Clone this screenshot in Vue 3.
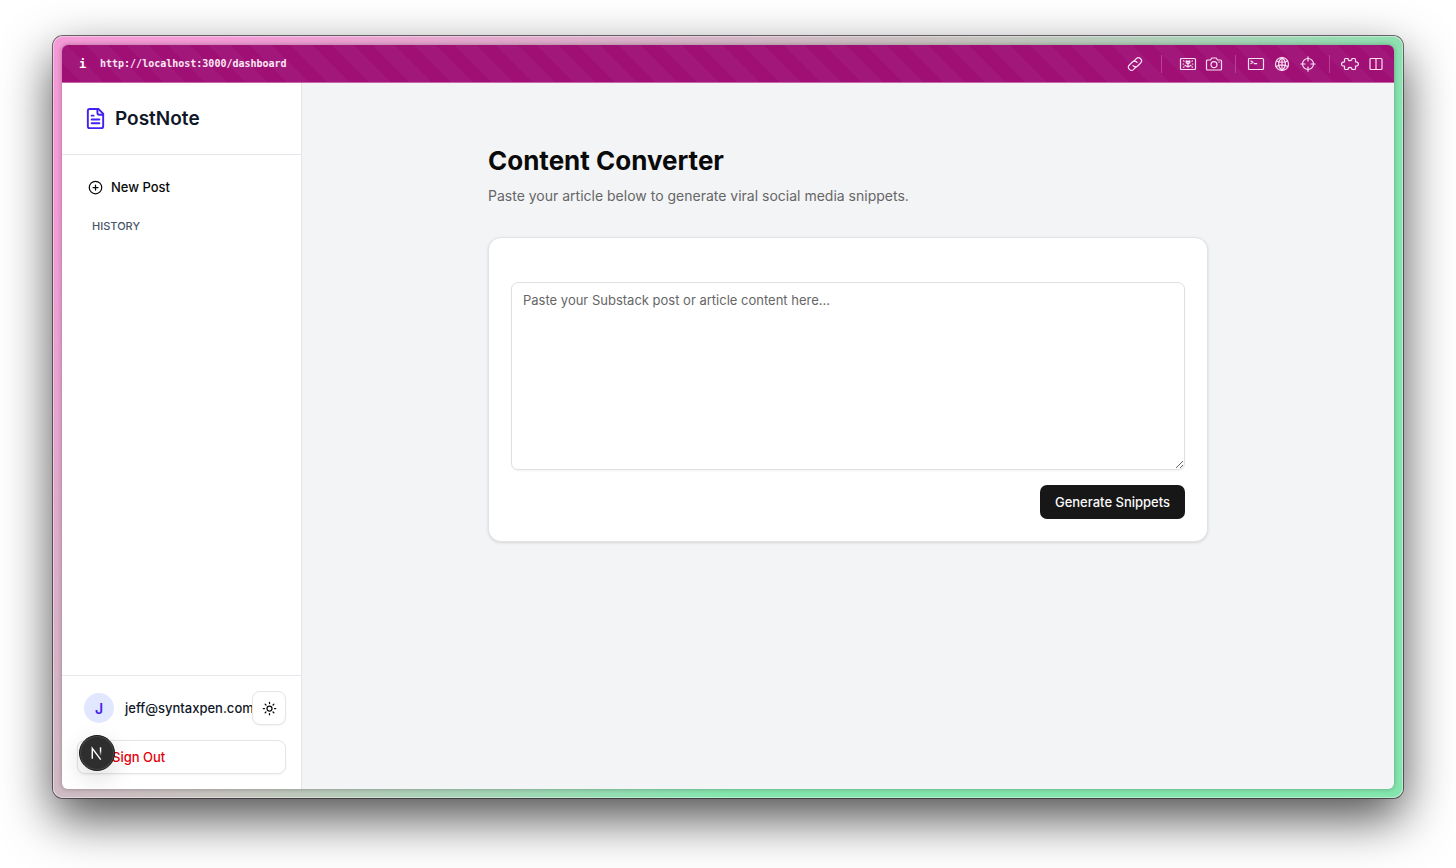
<template>
  <div class="desktop">
    <div class="browser">
      <div class="viewport">
        <header class="toolbar">
          <span class="info">i</span>
          <a class="address" href="http://localhost:3000/dashboard">http://localhost:3000/dashboard</a>
          <nav class="tools" aria-label="Browser tools">
            <div v-for="(group, index) in toolGroups" :key="index" class="tool-group">
              <button v-for="tool in group" :key="tool.name" type="button" class="tool" :aria-label="tool.name">
                <svg viewBox="0 0 18 16" aria-hidden="true">
                  <path v-for="d in tool.paths" :key="d" :d="d" />
                </svg>
              </button>
            </div>
          </nav>
        </header>

        <div class="app">
          <aside class="sidebar">
            <div class="brand">
              <svg class="brand-icon" viewBox="0 0 24 24" aria-hidden="true">
                <path d="M15 2H6a2 2 0 0 0-2 2v16a2 2 0 0 0 2 2h12a2 2 0 0 0 2-2V7z" />
                <path d="M14 2v4a2 2 0 0 0 2 2h4" />
                <path d="M10 9H8" />
                <path d="M16 13H8" />
                <path d="M16 17H8" />
              </svg>
              <span>PostNote</span>
            </div>

            <div class="menu">
              <button type="button" class="new-post" @click="content = ''">
                <svg viewBox="0 0 24 24" aria-hidden="true">
                  <circle cx="12" cy="12" r="10" />
                  <path d="M8 12h8M12 8v8" />
                </svg>
                New Post
              </button>
              <h2 class="history">HISTORY</h2>
            </div>

            <div class="account">
              <div class="user">
                <span class="avatar">J</span>
                <span class="email">jeff@syntaxpen.com</span>
                <button type="button" class="theme" aria-label="Toggle theme">
                  <svg viewBox="0 0 24 24" aria-hidden="true">
                    <circle cx="12" cy="12" r="4" />
                    <path d="M12 2v2M12 20v2M4.93 4.93l1.41 1.41M17.66 17.66l1.41 1.41M2 12h2M20 12h2M6.34 17.66l-1.41 1.41M19.07 4.93l-1.41 1.41" />
                  </svg>
                </button>
              </div>
              <div class="sign-out-row">
                <button type="button" class="sign-out">Sign Out</button>
                <!-- dev tools badge floats over the sign out button -->
                <button type="button" class="dev-badge" aria-label="Open dev tools">
                  <svg viewBox="0 0 36 36" aria-hidden="true">
                    <defs>
                      <linearGradient id="stem" x1="0" y1="0" x2="0" y2="1">
                        <stop offset="0.4" stop-color="#fff" />
                        <stop offset="1" stop-color="#fff" stop-opacity="0" />
                      </linearGradient>
                    </defs>
                    <path d="M13 24V13L22 25" fill="none" stroke="#fff" stroke-width="1.5" />
                    <rect x="21" y="12" width="1.5" height="9" fill="url(#stem)" />
                  </svg>
                </button>
              </div>
            </div>
          </aside>

          <main class="main">
            <div class="converter">
              <h1>Content Converter</h1>
              <p class="intro">Paste your article below to generate viral social media snippets.</p>
              <form class="card" @submit.prevent>
                <textarea
                  v-model="content"
                  aria-label="Article content"
                  placeholder="Paste your Substack post or article content here..."
                ></textarea>
                <button type="submit" class="generate">Generate Snippets</button>
              </form>
            </div>
          </main>
        </div>
      </div>
    </div>
  </div>
</template>

<script setup>
import { ref } from 'vue'

// article text typed by the user
const content = ref('')

// toolbar icons, split by thin dividers
const toolGroups = [
  [
    {
      name: 'Copy link',
      paths: [
        'M8 5l2.3-2.3a3 3 0 0 1 4.3 4.3l-3 3a3 3 0 0 1-4.3 0l-.3-.4',
        'M10 11l-2.3 2.3a3 3 0 0 1-4.3-4.3l3-3a3 3 0 0 1 4.3 0l.3.4',
      ],
    },
  ],
  [
    {
      name: 'Easel',
      paths: [
        'M2.5 2.5h13a1 1 0 0 1 1 1v9a1 1 0 0 1-1 1h-13a1 1 0 0 1-1-1v-9a1 1 0 0 1 1-1z',
        'M7.2 4.8l1.8 1 1.8-1v2l-1.8 1.2-1.8-1.200zM9 5v5.500M6 9.300l3 1.700 3-1.700',
        'M4.500 4.800l.6.4M13.500 4.800l-.6.4M4 8h.6M13.400 8h.6M4.500 11.200l.6-.4M13.500 11.200l-.6-.4',
      ],
    },
    {
      name: 'Screenshot',
      paths: [
        'M2.5 4h3l1.3-2h4.4l1.3 2h3a1 1 0 0 1 1 1v8a1 1 0 0 1-1 1h-13a1 1 0 0 1-1-1V5a1 1 0 0 1 1-1z',
        'M9 5.7a3 3 0 1 1 0 6 3 3 0 0 1 0-6zM13.8 6h.6',
      ],
    },
  ],
  [
    {
      name: 'Console',
      paths: [
        'M2.5 2.5h13a1 1 0 0 1 1 1v9a1 1 0 0 1-1 1h-13a1 1 0 0 1-1-1v-9a1 1 0 0 1 1-1z',
        'M4 5l2 1.3-2 1.3M7.2 7.7h2.5',
      ],
    },
    {
      name: 'Network',
      paths: [
        'M9 1.5a6.5 6.5 0 1 1 0 13 6.5 6.5 0 0 1 0-13z',
        'M9 1.5c-4.5 3.5-4.5 9.5 0 13M9 1.5c4.5 3.5 4.5 9.5 0 13',
        'M3.5 5c3 1.5 8 1.5 11 0M3 10.5c3.5-2 8.5-2 12 0M9 1.5v13',
      ],
    },
    {
      name: 'Inspect',
      paths: ['M9 2.5a5.5 5.5 0 1 1 0 11 5.5 5.5 0 0 1 0-11z', 'M9 .8v4.2M9 11v4.2M1.8 8H6M12 8h4.2'],
    },
  ],
  [
    {
      name: 'Extensions',
      paths: [
        'M4.5 2.5H7c0 1.700.8 2.200 2 2.200s2-.5 2-2.200h2.500c.8 0 1 .4 1 1v2.300c2 0 3 .8 3 2.200s-1 2.200-3 2.200v2.300c0 .6-.2 1-1 1H11c0-1.700-.8-2.200-2-2.200s-2 .5-2 2.200H4.500c-.8 0-1-.4-1-1v-2.300c-2 0-3-.8-3-2.200s1-2.200 3-2.200V3.500c0-.6.2-1 1-1z',
      ],
    },
    {
      name: 'Split view',
      paths: ['M4 2.500h10a1 1 0 0 1 1 1v9a1 1 0 0 1-1 1H4a1 1 0 0 1-1-1v-9a1 1 0 0 1 1-1z', 'M9 2.500v11'],
    },
  ],
]
</script>

<style>
body {
  margin: 0;
  background: #fff;
}
</style>

<style scoped>
* {
  box-sizing: border-box;
}

button {
  font: inherit;
  cursor: pointer;
}

.desktop {
  display: flex;
  min-height: 100vh;
  padding: 36px 53px 70px;
  overflow: hidden;
  font-family: Inter, 'Liberation Sans', sans-serif;
  font-size: 14px;
  color: #0a0a0a;
}

.browser {
  display: flex;
  flex: 1;
  min-width: 0;
  padding: 9px;
  border-radius: 10px;
  background: linear-gradient(135deg, #f49ad6 8%, #c3c4bd 45%, #84e6ae 68%);
  box-shadow:
    inset 0 0 0 1px rgba(255, 255, 255, 0.4),
    0 0 0 1px rgba(50, 40, 50, 0.7),
    0 20px 50px rgba(0, 0, 0, 0.7);
}

.viewport {
  display: flex;
  flex: 1;
  flex-direction: column;
  min-width: 0;
  border-radius: 6px;
  overflow: hidden;
  box-shadow: 0 0 5px rgba(0, 0, 0, 0.3);
}

/* toolbar */
.toolbar {
  display: flex;
  align-items: center;
  height: 38px;
  padding: 0 9px 0 17px;
  color: #fff;
  font-family: 'DejaVu Sans Mono', monospace;
  font-size: 10px;
  font-weight: 700;
  line-height: 16px;
  background: repeating-linear-gradient(45deg, #a01074 0 14px, #a2187a 14px 29px);
  border-bottom: 1px solid #c763ad;
}

.info {
  width: 21px;
  font-size: 12px;
}

.address {
  color: #fbe6f5;
  text-decoration: none;
}

.tools {
  display: flex;
  margin-left: auto;
}

.tool-group {
  display: flex;
  gap: 8px;
}

.tool-group + .tool-group {
  margin-left: 12px;
  padding-left: 11px;
  border-left: 1px solid #b8409a;
}

.tool-group:first-child {
  margin-right: 5px;
}

.tool-group:nth-child(2) {
  padding-left: 17px;
}

.tool {
  display: flex;
  padding: 1px 0;
  border: 0;
  background: none;
}

.tool svg {
  width: 18px;
  height: 16px;
  fill: none;
  stroke: #fbe0f4;
  stroke-width: 1.2;
  stroke-linecap: round;
  stroke-linejoin: round;
}

/* page */
.app {
  display: flex;
  flex: 1;
}

.sidebar {
  display: flex;
  flex-direction: column;
  flex-shrink: 0;
  width: 240px;
  border-right: 1px solid #e3e5e9;
  background: #fff;
}

.brand {
  display: flex;
  align-items: center;
  gap: 8px;
  height: 72px;
  padding: 0 22px;
  border-bottom: 1px solid #e5e7eb;
  color: #101828;
  font-size: 19px;
  font-weight: 600;
}

.brand-icon {
  width: 23px;
  height: 23px;
  fill: none;
  stroke: #4321f0;
  stroke-width: 2;
  stroke-linecap: round;
  stroke-linejoin: round;
}

.menu {
  flex: 1;
  padding: 15px;
}

.new-post {
  display: flex;
  align-items: center;
  gap: 8px;
  width: 100%;
  height: 34px;
  padding: 0 11px;
  border: 0;
  background: none;
  color: #0a0a0a;
  font-size: 13px;
  font-weight: 500;
}

.new-post svg,
.theme svg {
  width: 15px;
  height: 15px;
  fill: none;
  stroke: currentColor;
  stroke-width: 2;
  stroke-linecap: round;
  stroke-linejoin: round;
}

.history {
  margin: 15px;
  color: #4a5568;
  font-size: 11px;
  font-weight: 500;
  line-height: 15px;
}

.account {
  display: flex;
  flex-direction: column;
  gap: 15px;
  padding: 15px;
  border-top: 1px solid #e5e7eb;
}

.user {
  display: flex;
  align-items: center;
  padding-left: 7px;
}

.avatar {
  display: flex;
  flex-shrink: 0;
  align-items: center;
  justify-content: center;
  width: 30px;
  height: 30px;
  margin-right: 11px;
  border-radius: 50%;
  background: #e0e7ff;
  color: #4321f0;
  font-weight: 600;
}

.email {
  flex: 1;
  min-width: 0;
  color: #101828;
  font-size: 13px;
  font-weight: 500;
  white-space: nowrap;
}

.theme {
  display: flex;
  flex-shrink: 0;
  align-items: center;
  justify-content: center;
  width: 34px;
  height: 34px;
  padding: 0;
  border: 1px solid #e5e5e5;
  border-radius: 8px;
  background: #fff;
  color: #0a0a0a;
  box-shadow: 0 1px 2px rgba(0, 0, 0, 0.05);
}

.sign-out-row {
  position: relative;
}

.sign-out {
  width: 100%;
  height: 34px;
  padding: 0 34px;
  border: 1px solid #e5e5e5;
  border-radius: 8px;
  background: #fff;
  box-shadow: 0 1px 2px rgba(0, 0, 0, 0.05);
  color: #e7000b;
  font-size: 13px;
  font-weight: 500;
  text-align: left;
}

.dev-badge {
  position: absolute;
  top: -5px;
  left: 2px;
  width: 36px;
  height: 36px;
  padding: 0;
  border: 1px solid #1a1a1a;
  border-radius: 50%;
  background: #2e2e2e;
  box-shadow:
    inset 0 0 0 1px #4a4a4a,
    0 8px 24px rgba(0, 0, 0, 0.14);
}

.dev-badge svg {
  display: block;
  width: 100%;
  height: 100%;
}

.main {
  flex: 1;
  min-width: 0;
  padding: 60px 30px;
  background: #f3f4f6;
}

.converter {
  max-width: 720px;
  margin: 0 auto;
}

h1 {
  margin: 0;
  color: #0a0a0a;
  font-size: 26px;
  font-weight: 700;
  line-height: 36px;
}

.intro {
  margin: 6px 0 30px;
  color: #666;
  font-size: 14px;
  line-height: 22px;
}

.card {
  display: flex;
  flex-direction: column;
  align-items: flex-end;
  gap: 15px;
  padding: 44px 22px 22px;
  border: 1px solid #e2e3e5;
  border-radius: 13px;
  background: #fff;
  box-shadow: 0 1px 3px rgba(0, 0, 0, 0.12);
}

textarea {
  display: block;
  width: 100%;
  height: 188px;
  padding: 8px 11px;
  border: 1px solid #e0e0e0;
  border-radius: 7px;
  background: #fff;
  box-shadow: 0 1px 2px rgba(0, 0, 0, 0.05);
  color: #0a0a0a;
  font-family: inherit;
  font-size: 13px;
  line-height: 19px;
  resize: vertical;
}

textarea::placeholder {
  color: #666;
}

.generate {
  height: 34px;
  padding: 0 15px;
  border: 0;
  border-radius: 7px;
  background: #171717;
  color: #fafafa;
  font-size: 13px;
  font-weight: 500;
}
</style>
